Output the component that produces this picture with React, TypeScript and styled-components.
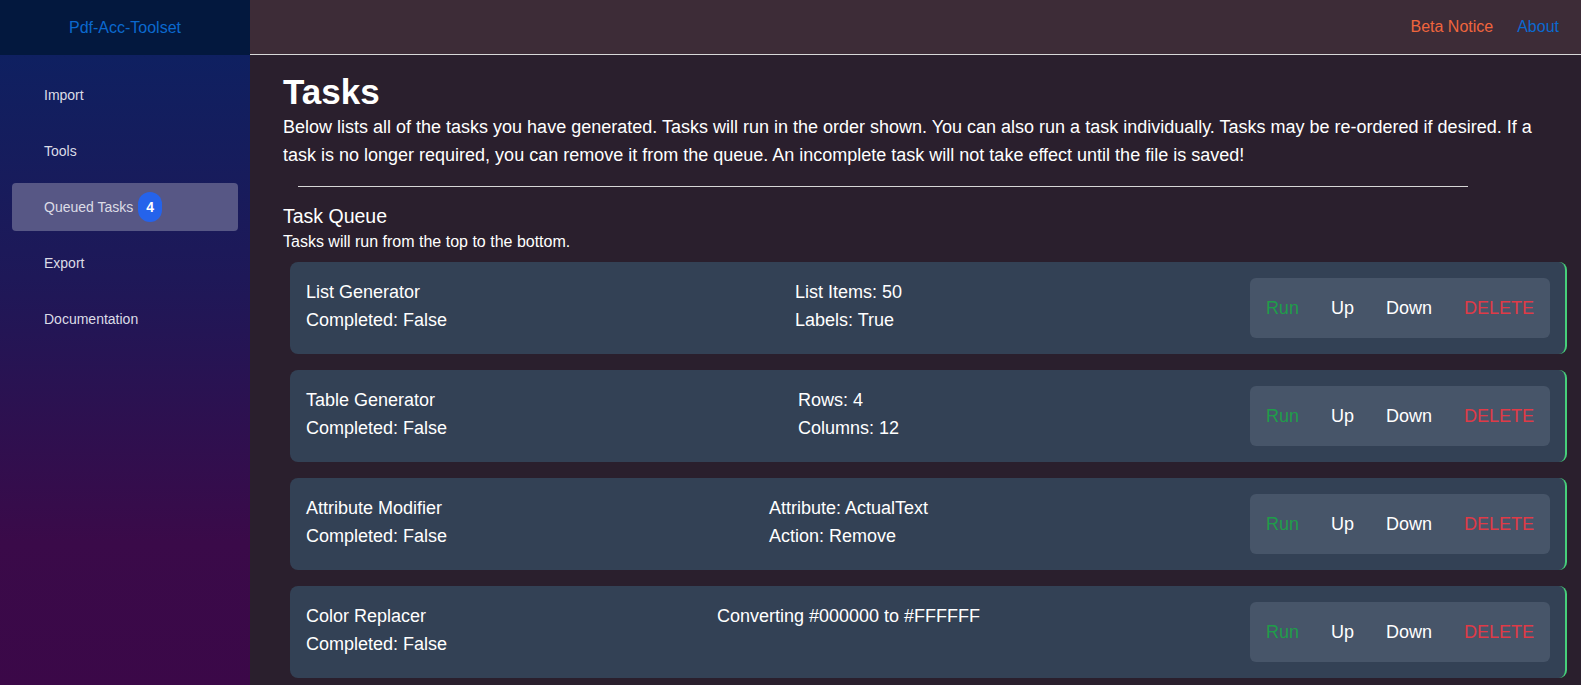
import styled, { createGlobalStyle } from "styled-components";

const GlobalStyle = createGlobalStyle`
    html, body {
        margin: 0;
        padding: 0;
        background: #2a1f2d;
        font-family: "Liberation Sans", Arial, sans-serif;
        color: #ffffff;
    }
    * {
        box-sizing: border-box;
    }
`;

const Layout = styled.div`
    display: flex;
    min-height: 685px;
`;

const Sidebar = styled.aside`
    width: 250px;
    flex-shrink: 0;
    display: flex;
    flex-direction: column;
    background: linear-gradient(180deg, #0b2263 0%, #1e1858 40%, #3a0a49 78%, #3b0848 100%);
`;

const Brand = styled.div`
    height: 55px;
    display: flex;
    align-items: center;
    justify-content: center;
    background: #03183e;
    color: #0b69cf;
    font-size: 16px;
`;

const Nav = styled.nav`
    display: flex;
    flex-direction: column;
    gap: 8px;
    padding: 16px 12px;
`;

const NavItem = styled.div<{ $active?: boolean }>`
    height: 48px;
    display: flex;
    align-items: center;
    gap: 5px;
    padding-left: 32px;
    border-radius: 4px;
    font-size: 14px;
    color: #dcdce6;
    background: ${(p) => (p.$active ? "#575785" : "transparent")};
`;

const Badge = styled.span`
    width: 24px;
    height: 30px;
    border-radius: 12px;
    background: #2563eb;
    color: #fff;
    font-weight: bold;
    font-size: 14px;
    display: flex;
    align-items: center;
    justify-content: center;
`;

const Main = styled.div`
    flex: 1;
    display: flex;
    flex-direction: column;
`;

const TopBar = styled.header`
    height: 55px;
    display: flex;
    align-items: center;
    justify-content: flex-end;
    gap: 24px;
    padding-right: 22px;
    background: #3d2c37;
    border-bottom: 1px solid #d8d8d8;
    font-size: 16px;
`;

const TopLink = styled.span<{ $color: string }>`
    color: ${(p) => p.$color};
`;

const Content = styled.main`
    padding: 0 14px 0 33px;
`;

const Title = styled.h1`
    margin: 16px 0 0;
    font-size: 35px;
    line-height: 42px;
    font-weight: bold;
`;

const Intro = styled.p`
    margin: 0;
    font-size: 18px;
    line-height: 28px;
`;

const Rule = styled.hr`
    margin: 17px 99px 0 15px;
    border: none;
    border-top: 1px solid #d6d6d6;
`;

const QueueTitle = styled.h2`
    margin: 17px 0 0;
    font-size: 19.5px;
    line-height: 24px;
    font-weight: normal;
`;

const QueueNote = styled.p`
    margin: 4px 0 0;
    font-size: 16px;
    line-height: 20px;
`;

const TaskList = styled.div`
    display: flex;
    flex-direction: column;
    gap: 16px;
    margin: 10px 0 16px 7px;
`;

const Card = styled.div`
    display: flex;
    align-items: flex-start;
    justify-content: space-between;
    padding: 16px 15px 16px 16px;
    background: #334155;
    border-radius: 8px;
    border-right: 2px solid #46cf7a;
`;

const Info = styled.div`
    font-size: 18px;
    line-height: 28px;
`;

const Actions = styled.div`
    display: flex;
    align-self: center;
    background: #475569;
    border-radius: 6px;
`;

const ActionButton = styled.button<{ $color: string }>`
    border: none;
    background: transparent;
    font-family: inherit;
    font-size: 18px;
    line-height: 24px;
    padding: 18px 16px;
    color: ${(p) => p.$color};
    cursor: pointer;
`;

const tasks = [
    { name: "List Generator", details: ["List Items: 50", "Labels: True"] },
    { name: "Table Generator", details: ["Rows: 4", "Columns: 12"] },
    { name: "Attribute Modifier", details: ["Attribute: ActualText", "Action: Remove"] },
    { name: "Color Replacer", details: ["Converting #000000 to #FFFFFF"] },
];

const navItems = ["Import", "Tools", "Queued Tasks", "Export", "Documentation"];

export default function App() {
    return (
        <>
            <GlobalStyle />
            <Layout>
                <Sidebar>
                    <Brand>Pdf-Acc-Toolset</Brand>
                    <Nav>
                        {navItems.map((item) => (
                            <NavItem key={item} $active={item === "Queued Tasks"}>
                                {item}
                                {item === "Queued Tasks" && <Badge>4</Badge>}
                            </NavItem>
                        ))}
                    </Nav>
                </Sidebar>
                <Main>
                    <TopBar>
                        <TopLink $color="#f0653d">Beta Notice</TopLink>
                        <TopLink $color="#0b69cf">About</TopLink>
                    </TopBar>
                    <Content>
                        <Title>Tasks</Title>
                        <Intro>
                            Below lists all of the tasks you have generated. Tasks will run in the order shown. You can also run a task individually. Tasks may be re-ordered if desired. If a task is no longer required, you can remove it from the queue. An incomplete task will not take effect until the file is saved!
                        </Intro>
                        <Rule />
                        <QueueTitle>Task Queue</QueueTitle>
                        <QueueNote>Tasks will run from the top to the bottom.</QueueNote>
                        <TaskList>
                            {tasks.map((task) => (
                                <Card key={task.name}>
                                    <Info>
                                        <div>{task.name}</div>
                                        <div>Completed: False</div>
                                    </Info>
                                    <Info>
                                        {task.details.map((d) => (
                                            <div key={d}>{d}</div>
                                        ))}
                                    </Info>
                                    <Actions>
                                        <ActionButton $color="#1f9d4a">Run</ActionButton>
                                        <ActionButton $color="#ffffff">Up</ActionButton>
                                        <ActionButton $color="#ffffff">Down</ActionButton>
                                        <ActionButton $color="#e03a47">DELETE</ActionButton>
                                    </Actions>
                                </Card>
                            ))}
                        </TaskList>
                    </Content>
                </Main>
            </Layout>
        </>
    );
}
